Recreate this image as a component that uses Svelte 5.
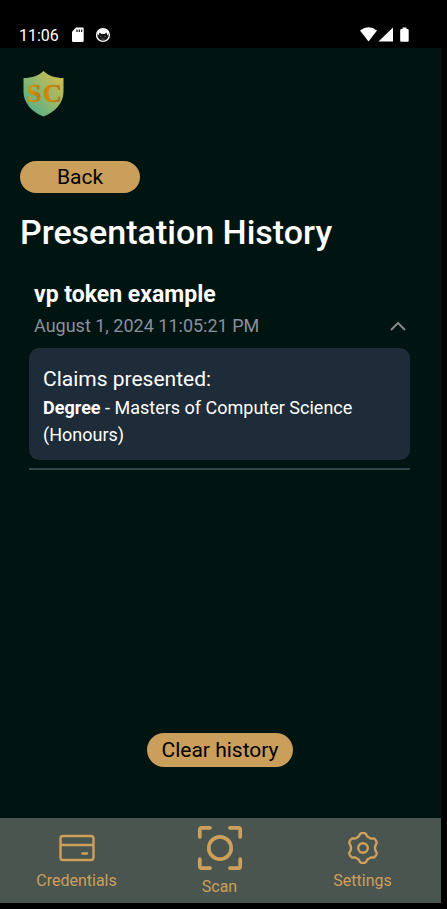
<script>
  const claims = [{ name: 'Degree', value: 'Masters of Computer Science (Honours)' }];
  let open = $state(true);

  // Six-lobed gear outline around the centre of a 34-unit box
  const gear =
    'M' +
    Array.from({ length: 180 }, (_, i) => {
      const a = (i / 180) * Math.PI * 2;
      const r = 13.5 - 1.6 * (Math.cos(6 * a) - 0.14 * Math.cos(18 * a));
      return `${(17 + r * Math.cos(a)).toFixed(2)} ${(17 + r * Math.sin(a)).toFixed(2)}`;
    }).join('L') +
    'Z';
</script>

<div class="device">
  <header class="status">
    <span class="time">11:06</span>
    <svg class="sd" width="12" height="16" viewBox="0 0 12 16" aria-hidden="true">
      <path d="M4 .5h6.500a1.200 1.200 0 0 1 1.200 1.200v12a1.200 1.200 0 0 1-1.200 1.200h-9.300a1.200 1.200 0 0 1-1.200-1.200V4.800z" fill="#fff" />
      <path d="M5 2.500v2.500M7.300 2.500v2.500M9.600 2.500v2.500" stroke="#222" stroke-width="1.300" />
    </svg>
    <svg class="cat" width="16" height="16" viewBox="0 0 16 16" aria-hidden="true">
      <circle cx="8" cy="8" r="6.400" fill="#111" stroke="#fff" stroke-width="1.400" />
      <path d="M2 6C3 .5 13 .5 14 6L12.500 8.500 11.500 5.500 9.500 7h-3L4.500 5.500 3.500 8.500z" fill="#fff" />
      <path d="M5 9.200l1.500.5M11 9.200l-1.500.5M6.300 12h3.400" stroke="#777" stroke-width=".9" />
    </svg>
    <span class="spacer"></span>
    <svg width="50" height="16" viewBox="0 0 50 16" aria-hidden="true" fill="#fff">
      <path d="M0 3.600Q8.500-3 17 3.600L8.500 14.500z" />
      <path d="M18.500 14.500L33 .5v14z" />
      <path d="M42.500.5h4v1.500h1a1.200 1.200 0 0 1 1.200 1.200v10.600a1 1 0 0 1-1 1h-6.500a1 1 0 0 1-1-1V3.200A1.200 1.200 0 0 1 41.400 2h1.100z" />
    </svg>
  </header>

  <main>
    <svg class="logo" width="42" height="46" viewBox="0 0 42 46" role="img" aria-label="SC shield">
      <defs>
        <linearGradient id="shield" x1="0" y1="1" x2="1" y2="0">
          <stop offset=".2" stop-color="#62b184" />
          <stop offset=".5" stop-color="#8fb76f" />
          <stop offset="1" stop-color="#dfbd45" />
        </linearGradient>
        <linearGradient id="gold">
          <stop offset="0" stop-color="#e09b08" />
          <stop offset=".35" stop-color="#b97c12" />
          <stop offset=".6" stop-color="#d28a0a" />
          <stop offset="1" stop-color="#a87417" />
        </linearGradient>
      </defs>
      <path d="M20.500 0C16 4.500 9 7 .5 7v14c0 11 9 20.500 20 24.500 11-4 20-13.500 20-24.500V7C32 7 25 4.500 20.500 0z" fill="url(#shield)" />
      <text x="4 20" y="31" fill="url(#gold)" stroke="url(#gold)" stroke-width=".6">SC</text>
    </svg>

    <button class="pill back">Back</button>
    <h1>Presentation History</h1>

    <article>
      <button class="entry" aria-expanded={open} aria-controls="claims" onclick={() => (open = !open)}>
        <span class="name">vp token example</span>
        <span class="row">
          <span class="date">August 1, 2024 11:05:21 PM</span>
          <svg class:closed={!open} width="16" height="10" viewBox="0 0 16 10" aria-hidden="true">
            <path d="M1 9l7-7 7 7" fill="none" stroke="#858886" stroke-width="2" />
          </svg>
        </span>
      </button>
      {#if open}
        <section id="claims">
          <h2>Claims presented:</h2>
          {#each claims as claim}
            <p><strong>{claim.name}</strong> - {claim.value}</p>
          {/each}
        </section>
      {/if}
    </article>

    <button class="pill clear">Clear history</button>
  </main>

  <nav>
    <a href="#credentials">
      <svg width="36" height="34" viewBox="0 0 36 34" aria-hidden="true">
        <g fill="none" stroke="#cca05a" stroke-width="2.400">
          <rect x="1.500" y="5" width="33" height="24" rx="2.500" />
          <path d="M1.500 14h33" />
          <path d="M23.500 22.500h4.500" stroke-linecap="round" />
        </g>
      </svg>
      <span>Credentials</span>
    </a>
    <a href="#scan" class="scan">
      <svg width="46" height="46" viewBox="0 0 46 46" aria-hidden="true">
        <g fill="none" stroke="#cca05a" stroke-width="3.700" stroke-linecap="round">
          <path d="M2.800 12V4.500a1.700 1.700 0 0 1 1.700-1.700H13M33 2.800h8.500a1.700 1.700 0 0 1 1.700 1.700V12M43.200 34v7.500a1.700 1.700 0 0 1-1.700 1.700H33M13 43.200H4.500a1.700 1.700 0 0 1-1.700-1.700V34" />
          <circle cx="23" cy="23" r="11.200" />
        </g>
      </svg>
      <span>Scan</span>
    </a>
    <a href="#settings">
      <svg width="34" height="34" viewBox="0 0 34 34" aria-hidden="true">
        <g fill="none" stroke="#cca05a" stroke-width="2.400">
          <path d={gear} />
          <circle cx="17" cy="17" r="4.800" />
        </g>
      </svg>
      <span>Settings</span>
    </a>
  </nav>
</div>

<style>
  :global(body) {
    margin: 0;
    background: #000;
  }
  .device {
    box-sizing: border-box;
    min-height: 100vh;
    padding: 0 6px 6px 0;
    display: flex;
    flex-direction: column;
    background: #000;
    color: #fff;
    font-family: Roboto, 'Liberation Sans', sans-serif;
  }
  .status {
    display: flex;
    align-items: center;
    height: 48px;
    box-sizing: border-box;
    padding: 22px 31px 0 19px;
  }
  .time {
    font-size: 16px;
  }
  .sd {
    margin-left: 13px;
  }
  .cat {
    margin-left: 11px;
  }
  .spacer {
    flex: 1;
  }
  main {
    flex: 1;
    display: flex;
    flex-direction: column;
    align-items: flex-start;
    padding: 23px 21px 51px 20px;
    background: #001412;
  }
  .logo {
    margin-left: 3px;
  }
  .logo text {
    font: bold 26px 'Liberation Serif', serif;
  }
  .pill {
    border: 0;
    border-radius: 17px;
    background: #c99f5b;
    color: #000;
    font-family: inherit;
    font-size: 21px;
    font-weight: 400;
    padding: 0 14px;
  }
  .back {
    width: 120px;
    height: 32px;
    margin-top: 44px;
  }
  .clear {
    height: 34px;
    align-self: center;
    margin-top: auto;
  }
  h1 {
    margin: 18px 0 0;
    font-size: 34px;
    line-height: 42px;
    font-weight: 500;
  }
  article {
    align-self: stretch;
    margin: 25px 10px 0 9px;
    padding-bottom: 8px;
    border-bottom: 2px solid #36444b;
  }
  .entry {
    display: block;
    width: 100%;
    padding: 0 4px 8px 5px;
    border: 0;
    background: none;
    color: inherit;
    font-family: inherit;
    text-align: left;
  }
  .name {
    display: block;
    font-size: 23px;
    line-height: 34px;
    font-weight: 700;
  }
  .row {
    display: flex;
    align-items: center;
    justify-content: space-between;
  }
  .date {
    font-size: 18px;
    line-height: 28px;
    color: #8b909b;
  }
  .closed {
    transform: rotate(180deg);
  }
  section {
    padding: 16px 14px 12px;
    border-radius: 10px;
    background: #1e2b38;
  }
  h2 {
    margin: 0;
    font-size: 21px;
    line-height: 30px;
    font-weight: 400;
  }
  p {
    margin: 0;
    font-size: 18px;
    line-height: 27px;
  }
  nav {
    display: flex;
    justify-content: center;
    height: 85px;
    padding-right: 2px;
    background: #4a5550;
  }
  a {
    box-sizing: border-box;
    flex: 0 1 143px;
    padding-top: 13px;
    display: flex;
    flex-direction: column;
    align-items: center;
    gap: 6px;
    color: #cca05a;
    font-size: 16px;
    line-height: 20px;
    text-decoration: none;
  }
  .scan {
    padding-top: 7px;
  }
</style>
